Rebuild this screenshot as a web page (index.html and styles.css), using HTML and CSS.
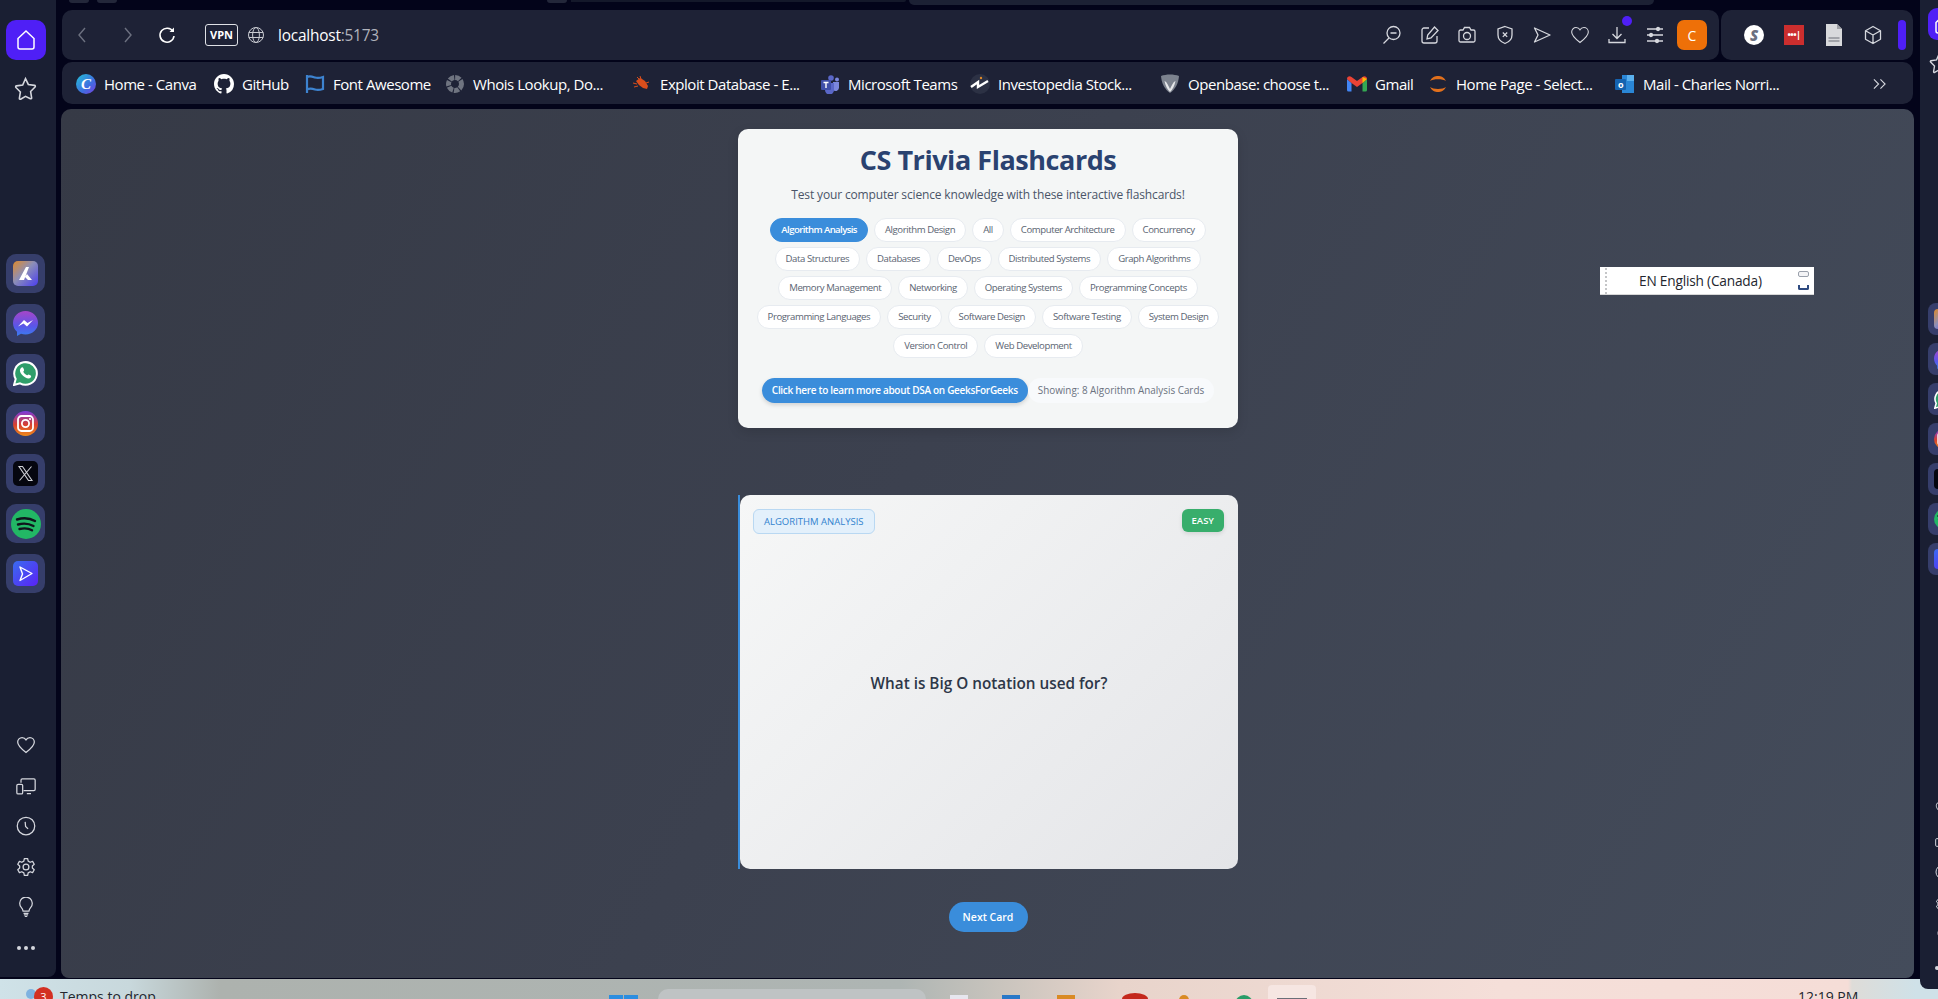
FILE: index.html
```html
<!DOCTYPE html>
<html lang="en">
<head>
<meta charset="utf-8">
<title>CS Trivia Flashcards</title>
<link rel="stylesheet" href="styles.css">
</head>
<body>
<svg class="defs" aria-hidden="true">
  <defs>
    <linearGradient id="gAi" x1="0" y1="0" x2="1" y2="1"><stop offset="0" stop-color="#e08a2a"/><stop offset=".45" stop-color="#8c8fb8"/><stop offset="1" stop-color="#4a3df0"/></linearGradient>
    <linearGradient id="gMsg" x1="0" y1="0" x2="0" y2="1"><stop offset="0" stop-color="#a646c8"/><stop offset=".6" stop-color="#5a55e8"/><stop offset="1" stop-color="#3a7df0"/></linearGradient>
    <linearGradient id="gIg" x1="0" y1="0" x2="0" y2="1"><stop offset="0" stop-color="#7a3be0"/><stop offset=".55" stop-color="#d8402e"/><stop offset="1" stop-color="#ee8a1c"/></linearGradient>
    <linearGradient id="gPlay" x1="0" y1="0" x2="1" y2="1"><stop offset="0" stop-color="#3a6cf0"/><stop offset="1" stop-color="#5a22f5"/></linearGradient>
    <symbol id="home" viewBox="0 0 24 24"><path d="M4 10.500 12 3l8 7.500V19a2 2 0 0 1-2 2H6a2 2 0 0 1-2-2z"/></symbol>
    <symbol id="star" viewBox="0 0 24 24"><path d="M12 2.500l2.700 5.600 6 .9c.7.1 1 1 .5 1.500l-4.300 4.300 1 6.100c.1.700-.6 1.200-1.200.900L12 19.500l-4.700 2.800c-.6.300-1.300-.2-1.200-.9l1-6.100-4.300-4.300c-.5-.5-.2-1.400.5-1.500l6-.9z"/></symbol>
    <symbol id="heart" viewBox="0 0 24 24"><path d="M12 21C6 16.500 2 13 2 8.500 2 5.400 4.400 3 7.300 3 9.200 3 11 4 12 5.800 13 4 14.800 3 16.700 3 19.600 3 22 5.400 22 8.500 22 13 18 16.500 12 21z"/></symbol>
    <symbol id="devices" viewBox="0 0 24 24"><path d="M6 8V5a1.500 1.500 0 0 1 1.500-1.500h14A1.500 1.500 0 0 1 23 5v11a1.500 1.500 0 0 1-1.500 1.500H9M13 21h5"/><rect x="1" y="10" width="7" height="11.500" rx="1.500"/></symbol>
    <symbol id="clock" viewBox="0 0 24 24"><circle cx="12" cy="12" r="10.500"/><path d="M11 7l.5 5.500 3 3"/></symbol>
    <symbol id="gear" viewBox="0 0 24 24"><circle cx="12" cy="12" r="3.500"/><path d="M10 2h4l.6 3 2.400 1.300 2.900-1 2 3.400-2.300 2 .0 2.600 2.300 2-2 3.400-2.900-1L14.600 19l-.6 3h-4l-.6-3L7 17.700l-2.900 1-2-3.400 2.300-2v-2.600l-2.300-2 2-3.400 2.900 1L9.400 5z" stroke-linejoin="round"/></symbol>
    <symbol id="bulb" viewBox="0 0 24 24"><path d="M8.500 17c-.2-2-1-3-2.200-4.500A7.500 7.500 0 1 1 17.700 12.500C16.500 14 15.700 15 15.500 17zM9 19.500h6M9.500 21.500h5M10.500 23.500h3"/></symbol>
    <symbol id="ai" viewBox="0 0 25 25"><rect width="25" height="25" rx="5" fill="url(#gAi)"/><path d="M6 19 13 6h3L11 19zM14 13l5 6h-4l-3-3z" fill="#fff"/></symbol>
    <symbol id="msg" viewBox="0 0 25 25"><path d="M12.500 0C5.500 0 0 5.200 0 12c0 3.600 1.500 6.700 4 8.800V25l4-2.200c1.400.4 2.900.6 4.500.6 7 0 12.500-5.200 12.500-11.400C25 5.200 19.500 0 12.500 0z" fill="url(#gMsg)"/><path d="M5 15.500l6-6.500 3.500 3 5.500-3-6 6.500-3.500-3z" fill="#fff"/></symbol>
    <symbol id="wa" viewBox="0 0 25 25"><path d="M1 24l1.700-6A11.300 11.300 0 1 1 7 22.300z" fill="#2f9e6a" stroke="#fff" stroke-width="2"/><path d="M8 7c1-1 2-.8 2.300 0l.8 2c.1.500-.8 1.300-.8 1.800.6 1.500 2 2.800 3.700 3.500.5 0 1.200-1 1.700-.8l2 1c.7.400.6 1.300-.2 2.200-1 1-3 1-5.500-.5-2.500-1.500-4.500-3.700-5-6-.2-1.200.2-2.300 1-3.200z" fill="#fff"/></symbol>
    <symbol id="ig" viewBox="0 0 25 25"><circle cx="12.500" cy="12.500" r="12.500" fill="url(#gIg)"/><rect x="5" y="5" width="15" height="15" rx="3.500" fill="none" stroke="#fff" stroke-width="1.800"/><circle cx="12.500" cy="12.500" r="3.600" fill="none" stroke="#fff" stroke-width="1.800"/><circle cx="17" cy="8" r="1.100" fill="#fff"/></symbol>
    <symbol id="x" viewBox="0 0 25 25"><rect width="25" height="25" rx="5" fill="#05060f"/><path d="M6 5.500h3.500L19 19.500h-3.500zM18.500 5.500 6.500 19.500" fill="none" stroke="#cfd0d6" stroke-width="1.100"/></symbol>
    <symbol id="spot" viewBox="0 0 30 30"><circle cx="15" cy="15" r="15" fill="#22b765"/><path d="M6 10.500c6-1.800 13-1.300 18 1.500M7 15.500c5-1.400 11-1 15.500 1.500M8.500 20c4-1 9-.8 12.500 1.300" fill="none" stroke="#10141c" stroke-width="2.400" stroke-linecap="round"/></symbol>
    <symbol id="play" viewBox="0 0 25 25"><rect width="25" height="25" rx="5" fill="url(#gPlay)"/><path d="M7 6l12 6.500L7 19.500 9.500 13z" fill="none" stroke="#fff" stroke-width="1.400" stroke-linejoin="round"/></symbol>
  </defs>
</svg>

<div class="desktop">
  <div class="window">
    <aside class="sidebar">
      <a class="home-tile"><svg class="line lg"><use href="#home"/></svg></a>
      <svg class="line star"><use href="#star"/></svg>
      <div class="tiles">
        <div class="tile"><svg class="app"><use href="#ai"/></svg></div>
        <div class="tile"><svg class="app"><use href="#msg"/></svg></div>
        <div class="tile"><svg class="app"><use href="#wa"/></svg></div>
        <div class="tile"><svg class="app"><use href="#ig"/></svg></div>
        <div class="tile"><svg class="app"><use href="#x"/></svg></div>
        <div class="tile"><svg class="spot"><use href="#spot"/></svg></div>
        <div class="tile"><svg class="app"><use href="#play"/></svg></div>
      </div>
      <div class="side-tools">
        <svg class="line tool"><use href="#heart"/></svg>
        <svg class="line tool"><use href="#devices"/></svg>
        <svg class="line tool"><use href="#clock"/></svg>
        <svg class="line tool"><use href="#gear"/></svg>
        <svg class="line tool"><use href="#bulb"/></svg>
        <div class="dots"><span></span><span></span><span></span></div>
      </div>
    </aside>

    <div class="browser">
      <div class="tabstrip">
        <span class="tab-dot"></span><span class="tab-dot"></span><span class="tab-gap"></span><span class="tab-dot"></span>
        <span class="tab-fill"></span><span class="tab-active"></span>
      </div>
      <div class="toprow">
        <div class="toolbar">
          <svg class="nav dim" viewBox="0 0 12 20"><path d="M9 3 3 10l6 7"/></svg>
          <svg class="nav dim fwd" viewBox="0 0 12 20"><path d="M3 3l6 7-6 7"/></svg>
          <svg class="reload" viewBox="0 0 20 20"><path d="M16 6.500A7 7 0 1 0 17 11"/><path d="M17 2.500V7h-4.500z" fill="#fff" stroke="none"/></svg>
          <span class="vpn">VPN</span>
          <svg class="globe" viewBox="0 0 18 18"><circle cx="9" cy="9" r="7.500"/><ellipse cx="9" cy="9" rx="3.400" ry="7.500"/><path d="M1.800 6.500h14.400M1.800 11.500h14.400"/></svg>
          <span class="url">localhost<span class="port">:5173</span></span>
          <div class="actions">
            <svg class="act" viewBox="0 0 20 20"><circle cx="11.500" cy="8" r="6.500"/><path d="M8.500 8h6M7 13l-5.500 5.500"/></svg>
            <svg class="act" viewBox="0 0 20 20"><path d="M9 3H4a2 2 0 0 0-2 2v11a2 2 0 0 0 2 2h11a2 2 0 0 0 2-2v-5"/><path d="M14.500 2 18 5.500 11 13l-4 1 .7-4z"/></svg>
            <svg class="act" viewBox="0 0 20 20"><path d="M2 6.500a1.500 1.500 0 0 1 1.500-1.500H6l1.500-2.500h5L14 5h2.500A1.500 1.500 0 0 1 18 6.500v9a1.500 1.500 0 0 1-1.500 1.500h-13A1.500 1.500 0 0 1 2 15.500z"/><circle cx="10" cy="11" r="3.500"/></svg>
            <svg class="act" viewBox="0 0 20 20"><path d="M10 1.500l7 2.500v6c0 4-3 7-7 8.500-4-1.500-7-4.500-7-8.500V4z"/><path d="M7.800 7.500l4.400 4.400M12.200 7.500l-4.400 4.400"/></svg>
            <svg class="act" viewBox="0 0 20 20"><path d="M2.500 3 18 10 2.500 17 6 10z" stroke-linejoin="round"/></svg>
            <svg class="act" viewBox="0 0 24 24"><use href="#heart"/></svg>
            <div class="dl">
              <svg class="act" viewBox="0 0 20 20"><path d="M10 2v11M5.500 9l4.500 4.500L14.500 9M2 14v3.500h16V14"/></svg>
              <span class="dl-badge"></span>
            </div>
            <svg class="act" viewBox="0 0 20 20"><path d="M2 4h16M2 10h16M2 16h16"/><circle cx="13" cy="4" r="1.500" fill="#d6d8de"/><circle cx="6" cy="10" r="1.500" fill="#d6d8de"/><circle cx="12" cy="16" r="1.500" fill="#d6d8de"/></svg>
            <span class="avatar">C</span>
          </div>
        </div>
        <div class="extensions">
          <span class="ext-s">S</span>
          <span class="ext-lp">•••|</span>
          <svg class="ext-doc" viewBox="0 0 18 22"><path d="M1 0h11l5 5v17H1z" fill="#d8d9dc"/><path d="M12 0v5h5z" fill="#9ea0a6"/><path d="M3.500 14h11M3.500 17h11" stroke="#8f9198" stroke-width="1.500"/></svg>
          <svg class="act" viewBox="0 0 20 20"><path d="M10 1.500 17.500 5.800v8.400L10 18.500l-7.500-4.300V5.800zM2.500 5.800 10 10l7.500-4.200M10 10v8.500" stroke-linejoin="round"/></svg>
          <span class="ext-bar"></span>
        </div>
      </div>

      <nav class="bookmarks">
        <a class="bm"><span class="ico-canva">C</span>Home - Canva</a>
        <a class="bm"><svg class="bm-ico" viewBox="0 0 16 16"><path fill="#fff" d="M8 0C3.580 0 0 3.580 0 8c0 3.540 2.290 6.530 5.470 7.590.4.070.55-.17.55-.38 0-.19-.01-.82-.01-1.490-2.010.37-2.530-.49-2.690-.94-.09-.23-.48-.94-.82-1.130-.28-.15-.68-.52-.01-.53.63-.01 1.080.58 1.230.82.72 1.210 1.870.87 2.330.66.070-.52.28-.87.51-1.070-1.780-.2-3.640-.89-3.640-3.950 0-.87.31-1.590.82-2.150-.08-.2-.36-1.020.08-2.120 0 0 .67-.21 2.200.82.64-.18 1.320-.27 2-.27.68 0 1.360.09 2 .27 1.530-1.040 2.200-.82 2.200-.82.44 1.100.16 1.920.08 2.120.51.56.82 1.270.82 2.150 0 3.070-1.870 3.750-3.650 3.950.29.25.54.73.54 1.480 0 1.070-.01 1.930-.01 2.200 0 .21.15.46.55.38A8.013 8.013 0 0 0 16 8c0-4.420-3.580-8-8-8z"/></svg>GitHub</a>
        <a class="bm"><svg class="bm-ico" viewBox="0 0 20 20"><path d="M2 1v18M2 3c3-1.500 5-.5 8 .5s5 .5 8-.5v12c-3 1-5 1.500-8 .5s-5-1.500-8 0" fill="none" stroke="#3d83d0" stroke-width="2.200"/></svg>Font Awesome</a>
        <a class="bm"><svg class="bm-ico" viewBox="0 0 20 20"><circle cx="10" cy="10" r="6.500" fill="none" stroke="#6f7480" stroke-width="5" stroke-dasharray="5 1"/></svg>Whois Lookup, Do...</a>
        <a class="bm"><svg class="bm-ico" viewBox="0 0 20 20"><path d="M4 7l4-3 2 1 3 2 3 5-1 3-4-1-4-3z" fill="#d94e1c"/><path d="M1 9l4 1M2 13l4-1M8 2l1 3M5 3l2 2M17 8l-3 1" stroke="#d94e1c" stroke-width="1"/></svg>Exploit Database - E...</a>
        <a class="bm"><svg class="bm-ico" viewBox="0 0 20 20"><circle cx="11" cy="4" r="2.800" fill="#5a67c8"/><circle cx="17" cy="5.500" r="2" fill="#7b87dc"/><path d="M13 8h6v6a3.500 3.500 0 0 1-6 2z" fill="#7b87dc"/><path d="M5 9h9v7a4 4 0 0 1-9 0z" fill="#5a67c8"/><rect x="1" y="6" width="10" height="10" rx="1" fill="#3f4fa8"/><path d="M3.500 8.500h5M6 8.500V14" stroke="#fff" stroke-width="1.400"/></svg>Microsoft Teams</a>
        <a class="bm"><svg class="bm-ico" viewBox="0 0 20 20"><circle cx="10" cy="10" r="10" fill="#2c3144"/><path d="M1 13l7-5v5l10-6" fill="none" stroke="#fff" stroke-width="2.400"/><circle cx="11" cy="4" r="1.200" fill="#e08a2a"/></svg>Investopedia Stock...</a>
        <a class="bm"><svg class="bm-ico" viewBox="0 0 20 20"><path d="M1 2c5-2 13-2 18 0-.5 7-3.500 13-9 17C4.500 15 1.500 9 1 2z" fill="#7c828e"/><path d="M4.500 7c2.500 1 3.500 4 5.500 8 2-4 3-7 5.500-8-1 5-3 8.500-5.500 11C7.500 15.500 5.500 12 4.500 7z" fill="#e6e7ea"/></svg>Openbase: choose t...</a>
        <a class="bm"><svg class="bm-ico" viewBox="0 0 20 16"><path d="M0 3v11a1.500 1.500 0 0 0 1.500 1.500H4.500V7z" fill="#4285f4"/><path d="M20 3v11a1.500 1.500 0 0 1-1.500 1.500h-3V7z" fill="#34a853"/><path d="M0 3c0-2.500 2.600-3.500 4.500-2L10 5l5.500-4C17.400-.5 20 .5 20 3l-4.500 4L10 11 4.500 7z" fill="#ea4335"/><path d="M15.500 1 20 3l-4.500 4z" fill="#fbbc04"/></svg>Gmail</a>
        <a class="bm"><svg class="bm-ico" viewBox="0 0 20 20"><path d="M2 7C4 3 7 2 10 2s6 1 8 5C15 4.500 5 4.500 2 7zM2 13c3 2.500 13 2.500 16 0-2 4-5 5-8 5s-6-1-8-5z" fill="#e2701c"/></svg>Home Page - Select...</a>
        <a class="bm"><svg class="bm-ico" viewBox="0 0 20 20"><path d="M7 1h12v18H7z" fill="#2a86d6"/><path d="M12 1h7v6h-7z" fill="#5ab0ee"/><rect x="0" y="5" width="11" height="11" rx="1" fill="#1563b0"/><text class="o-letter" x="5.500" y="13.500">o</text></svg>Mail - Charles Norri...</a>
        <svg class="more" viewBox="0 0 14 12"><path d="M1 1l5 5-5 5M8 1l5 5-5 5"/></svg>
      </nav>

      <main class="panel">
        <section class="header-card">
          <h1 class="title">CS Trivia Flashcards</h1>
          <p class="subtitle">Test your computer science knowledge with these interactive flashcards!</p>
          <div class="filters">
            <button class="pill active">Algorithm Analysis</button>
            <button class="pill">Algorithm Design</button>
            <button class="pill">All</button>
            <button class="pill">Computer Architecture</button>
            <button class="pill">Concurrency</button>
            <button class="pill">Data Structures</button>
            <button class="pill">Databases</button>
            <button class="pill">DevOps</button>
            <button class="pill">Distributed Systems</button>
            <button class="pill">Graph Algorithms</button>
            <button class="pill">Memory Management</button>
            <button class="pill">Networking</button>
            <button class="pill">Operating Systems</button>
            <button class="pill">Programming Concepts</button>
            <button class="pill">Programming Languages</button>
            <button class="pill">Security</button>
            <button class="pill">Software Design</button>
            <button class="pill">Software Testing</button>
            <button class="pill">System Design</button>
            <button class="pill">Version Control</button>
            <button class="pill">Web Development</button>
          </div>
          <div class="links">
            <a class="learn">Click here to learn more about DSA on GeeksForGeeks</a>
            <span class="showing">Showing: 8 Algorithm Analysis Cards</span>
          </div>
        </section>

        <section class="flashcard">
          <div class="card-top">
            <span class="tag">ALGORITHM ANALYSIS</span>
            <span class="level">EASY</span>
          </div>
          <p class="question">What is Big O notation used for?</p>
        </section>

        <button class="next">Next Card</button>

        <div class="langbar">
          <span class="grip"></span>
          <span class="lang">EN English (Canada)</span>
          <span class="lang-ctl"><i class="ctl-a"></i><i class="ctl-b"></i></span>
        </div>
      </main>
    </div>

    <aside class="sidebar-2">
      <a class="home-tile-2"><svg class="line lg"><use href="#home"/></svg></a>
      <svg class="line star"><use href="#star"/></svg>
      <div class="tiles-2">
        <div class="tile-2"><svg class="app-2"><use href="#ai"/></svg></div>
        <div class="tile-2"><svg class="app-2"><use href="#msg"/></svg></div>
        <div class="tile-2"><svg class="app-2"><use href="#wa"/></svg></div>
        <div class="tile-2"><svg class="app-2"><use href="#ig"/></svg></div>
        <div class="tile-2"><svg class="app-2"><use href="#x"/></svg></div>
        <div class="tile-2"><svg class="app-2"><use href="#spot"/></svg></div>
        <div class="tile-2"><svg class="app-2"><use href="#play"/></svg></div>
      </div>
      <div class="tools-2">
        <svg class="line tool-2"><use href="#heart"/></svg>
        <svg class="line tool-2"><use href="#devices"/></svg>
        <svg class="line tool-2"><use href="#clock"/></svg>
        <svg class="line tool-2"><use href="#gear"/></svg>
        <svg class="line tool-2"><use href="#bulb"/></svg>
        <div class="dots dots-2"><span></span><span></span><span></span></div>
      </div>
    </aside>
  </div>

  <footer class="taskbar">
    <span class="tb-ball"></span>
    <span class="tb-badge">3</span>
    <span class="tb-weather">Temps to drop</span>
    <span class="tb-win"><i></i><i></i></span>
    <span class="tb-search"></span>
    <span class="tb-icon tb-white"></span>
    <span class="tb-icon tb-blue"></span>
    <span class="tb-icon tb-orange"></span>
    <span class="tb-icon tb-red"></span>
    <span class="tb-icon tb-amber"></span>
    <span class="tb-icon tb-green"></span>
    <span class="tb-active"><i></i></span>
    <span class="tb-clock">12:19 PM</span>
  </footer>
</div>
</body>
</html>
```

FILE: styles.css
```css
* { box-sizing: border-box; }
html, body { margin: 0; height: 100%; overflow: hidden; }
body { background: #03041a; font-family: "Open Sans", "Noto Sans", sans-serif; }
.defs { position: absolute; width: 0; height: 0; }
button { font-family: inherit; }

.desktop { width: 1938px; height: 999px; display: flex; flex-direction: column; overflow: hidden; position: relative; }
.window { height: 979px; display: flex; align-items: flex-start; }

/* icons */
.line { fill: none; stroke: #d5d7de; stroke-width: 1.500; }
.lg { width: 24px; height: 26px; stroke: #fff; }
.star { width: 25px; height: 25px; display: block; }

/* left sidebar */
.sidebar { width: 56px; height: 977px; background: #1a1f33; border-bottom-right-radius: 8px; padding: 20px 0 0 6px; display: flex; flex-direction: column; align-items: flex-start; flex: none; }
.home-tile { width: 40px; height: 40px; background: #4f1ff6; border-radius: 10px; display: flex; align-items: center; justify-content: center; }
.sidebar .star { margin: 16px 0 0 7px; }
.tiles { margin-top: 153px; display: flex; flex-direction: column; gap: 11px; }
.tile { width: 39px; height: 39px; border-radius: 10px; background: #363e6b; display: flex; align-items: center; justify-content: center; }
.app { width: 25px; height: 25px; }
.spot { width: 30px; height: 30px; }
.side-tools { margin-top: 142px; width: 39px; display: flex; flex-direction: column; align-items: center; gap: 20.500px; }
.tool { width: 20px; height: 20px; display: block; }
.dots { display: flex; gap: 3px; height: 4px; margin-top: 8px; }
.dots span { width: 4px; height: 4px; border-radius: 50%; background: #d5d7de; }

/* browser */
.browser { width: 1858px; margin-left: 5px; flex: none; position: relative; }
.tabstrip { height: 10px; display: flex; align-items: flex-start; }
.tab-dot { width: 20px; height: 3px; background: #23273a; border-radius: 0 0 8px 8px; margin-left: 8px; }
.tab-gap { width: 422px; }
.tab-fill { width: 335px; height: 2px; background: #14182a; margin-left: 4px; border-radius: 0 0 8px 0; }
.tab-active { width: 745px; height: 5px; margin-left: 3px; background: #1c2134; border-radius: 0 0 10px 10px; }
.toprow { display: flex; gap: 2px; height: 50px; margin-left: 1px; }
.toolbar { width: 1657px; background: #1e2236; border-radius: 10px; display: flex; align-items: center; padding-left: 14px; }
.nav { width: 12px; height: 20px; fill: none; stroke: #6d7180; stroke-width: 1.400; flex: none; }
.fwd { margin-left: 34px; }
.reload { width: 20px; height: 20px; fill: none; stroke: #fff; stroke-width: 1.600; margin-left: 23px; flex: none; }
.vpn { width: 33px; height: 22px; margin-left: 28px; border: 1px solid #dfe1e6; border-radius: 3px; color: #fff; font-size: 11px; font-weight: 700; line-height: 20px; text-align: center; flex: none; }
.globe { width: 18px; height: 18px; fill: none; stroke: #c7c9d0; stroke-width: 1; margin-left: 9px; flex: none; }
.url { margin-left: 13px; font-size: 15.400px; color: #fff; letter-spacing: -.2px; white-space: nowrap; }
.port { color: #b0b3bc; }
.actions { margin-left: auto; display: flex; align-items: center; gap: 17.500px; padding-right: 12px; }
.act { width: 20px; height: 20px; fill: none; stroke: #d6d8de; stroke-width: 1.300; display: block; flex: none; }
.dl { position: relative; }
.dl-badge { position: absolute; top: -9px; right: -5px; width: 10px; height: 10px; border-radius: 50%; background: #4f1ff6; }
.avatar { width: 30px; height: 30px; background: #ee7008; border-radius: 7px; color: #fff; font-size: 14px; display: flex; align-items: center; justify-content: center; margin-left: -5px; }
.extensions { width: 192px; background: #1e2236; border-radius: 10px; display: flex; align-items: center; padding-left: 23px; }
.ext-s { width: 20px; height: 20px; border-radius: 50%; background: #fff; color: #6c7080; font-weight: 800; font-size: 15px; font-style: italic; line-height: 20px; text-align: center; flex: none; }
.ext-lp { width: 20px; height: 20px; background: #cc2e2e; color: #fff; font-size: 9px; font-weight: 700; line-height: 20px; text-align: center; margin-left: 20px; flex: none; letter-spacing: -.5px; }
.ext-doc { width: 18px; height: 22px; margin-left: 21px; flex: none; }
.extensions .act { margin-left: 20px; }
.ext-bar { width: 8px; height: 30px; border-radius: 4px; background: #4f1ff6; margin-left: 15px; }

/* bookmarks */
.bookmarks { margin: 2px 0 0 1px; width: 1851px; height: 42px; background: #1e2236; border-radius: 10px; display: grid; grid-template-columns: 138px 91px 140px 187px 188px 150px 190px 187px 81px 187px 258px 14px; align-items: center; padding: 2px 0 0 14px; }
.bm { display: flex; align-items: center; gap: 8px; color: #fff; font-size: 15px; white-space: nowrap; letter-spacing: -.45px; overflow: hidden; }
.bm-ico { width: 20px; height: 20px; flex: none; }
.ico-canva { width: 20px; height: 20px; border-radius: 50%; background: linear-gradient(135deg, #22c3d8, #3f6ee0 60%, #7a3de0); color: #fff; font: italic 700 15px/20px "Liberation Serif", serif; text-align: center; flex: none; letter-spacing: 0; }
.o-letter { font-size: 9px; font-weight: 700; fill: #fff; text-anchor: middle; }
.more { width: 13px; height: 12px; fill: none; stroke: #d5d7de; stroke-width: 1.200; }

/* panel */
.panel { position: relative; margin-top: 5px; width: 1853px; height: 869px; padding: 20px 0 0 1px; border-radius: 10px 10px 8px 8px; background: linear-gradient(120deg, #363a46 0%, #3c414f 45%, #444c5b 100%); display: flex; flex-direction: column; align-items: center; overflow: hidden; }
.header-card { width: 500px; height: 299px; background: #f4f6f6; border-radius: 10px; box-shadow: 0 4px 12px rgba(0,0,0,.12); padding: 12px 15px 0; text-align: center; flex: none; }
.title { margin: 0; font-size: 27px; line-height: 38px; font-weight: 700; color: #2a4270; letter-spacing: -.45px; }
.subtitle { margin: 6px 0 0; font-size: 12px; line-height: 20px; color: #4a5568; letter-spacing: -.15px; }
.filters { display: flex; flex-wrap: wrap; justify-content: center; gap: 5px 6px; margin-top: 13px; }
.pill { height: 24px; padding: 0 10px; border: 1px solid #e7ebf0; border-radius: 12px; background: #fff; color: #5a6472; font-size: 9.600px; line-height: 22px; white-space: nowrap; letter-spacing: -.42px; }
.pill.active { background: #3a8ddb; border-color: #3a8ddb; color: #fff; font-weight: 600; letter-spacing: -.6px; }
.links { display: flex; justify-content: center; margin-top: 20px; }
.learn { height: 25px; padding: 0 10px; border-radius: 13px; background: #3a8ddb; color: #fff; font-size: 10px; font-weight: 600; line-height: 25px; box-shadow: 0 2px 4px rgba(0,0,0,.15); white-space: nowrap; letter-spacing: -.3px; }
.showing { height: 25px; padding: 0 10px; border-radius: 13px; background: #f8fafc; color: #6b7280; font-size: 9.900px; line-height: 25px; white-space: nowrap; }

.flashcard { width: 498px; height: 374px; margin: 67px 0 0 2px; flex: none; padding: 14px 14px 0 13px; background: linear-gradient(135deg, #f6f7f7 0%, #e4e5e8 100%); border-radius: 10px; position: relative; }
.flashcard::before { content: ""; position: absolute; left: -2px; top: 0; bottom: 0; width: 2px; background: #3a8ddb; }
.card-top { display: flex; justify-content: space-between; align-items: flex-start; }
.tag { height: 25px; padding: 0 10px; background: #e3f0fb; border: 1px solid #b9d8f2; border-radius: 6px; color: #3182ce; font-size: 9.500px; line-height: 23px; }
.level { height: 23px; padding: 0 10px; background: #38ae6c; border-radius: 6px; color: #fff; font-size: 9.500px; font-weight: 600; line-height: 23px; box-shadow: 0 2px 4px rgba(0,0,0,.1); }
.question { margin: 0; position: absolute; left: 0; right: 0; top: 176px; text-align: center; font-size: 15.300px; font-weight: 600; line-height: 24px; color: #2d3748; }
.next { width: 79px; height: 30px; margin-top: 33px; border: 0; border-radius: 15px; background: #3a8ddb; color: #fff; font-size: 10.500px; font-weight: 600; flex: none; padding: 0; }

.langbar { position: absolute; left: 1539px; top: 158px; width: 214px; height: 28px; background: #fff; display: flex; align-items: center; border-bottom: 1px solid #d8d8d8; }
.grip { width: 2px; height: 26px; margin-left: 5px; border-left: 2px dotted #c5c6c8; }
.lang { margin-left: 32px; font-size: 13.700px; color: #23262e; letter-spacing: -.2px; white-space: nowrap; }
.lang-ctl { margin-left: auto; margin-right: 5px; width: 11px; display: flex; flex-direction: column; gap: 8px; }
.ctl-a { display: block; height: 6px; border: 1px solid #9aa0ab; border-radius: 2px; background: #f4f4f6; }
.ctl-b { display: block; height: 5px; border: 2px solid #2e4a80; border-top: 0; border-radius: 0 0 2px 2px; }

/* right sidebar */
.sidebar-2 { width: 22px; height: 989px; margin-left: 1px; background: #1a1f33; border-bottom-left-radius: 8px; padding: 8px 0 0 8px; flex: none; position: relative; z-index: 2; overflow: hidden; display: flex; flex-direction: column; align-items: flex-start; }
.home-tile-2 { width: 32px; height: 32px; flex: none; background: #4f1ff6; border-radius: 9px; display: flex; align-items: center; justify-content: center; }
.sidebar-2 .star { margin-top: 12px; width: 22px; height: 22px; flex: none; }
.tiles-2 { margin-top: 229px; display: flex; flex-direction: column; gap: 8px; flex: none; }
.tile-2 { width: 32px; height: 32px; border-radius: 8px; background: #363e6b; display: flex; align-items: center; justify-content: center; }
.app-2 { width: 20px; height: 20px; flex: none; }
.tools-2 { margin: 225px 0 0 7px; display: flex; flex-direction: column; gap: 16px; flex: none; }
.tool-2 { width: 16px; height: 16px; display: block; }
.dots-2 { margin-top: 6px; }

/* taskbar */
.taskbar { height: 20px; flex: none; display: flex; overflow: hidden; background: linear-gradient(90deg, #cfe2e8 0, #c8d8dc 130px, #adb2ae 220px, #aeb5b3 900px, #c9c4bd 1000px, #e8d4cb 1120px, #f5dfd9 1500px, #f5ddd7 1848px, #dedcd8 1852px, #cfe1e8 1916px); position: relative; color: #23262e; }
.tb-ball { width: 10px; height: 10px; margin: 10px 0 0 26px; border-radius: 50%; background: #7fb2e0; }
.tb-badge { width: 19px; height: 19px; margin: 8px 0 0 -2px; border-radius: 50%; background: #d32f22; color: #fff; font-size: 11px; line-height: 19px; text-align: center; flex: none; }
.tb-weather { margin: 9px 0 0 7px; font-size: 14px; line-height: 18px; white-space: nowrap; width: 110px; flex: none; }
.tb-win { display: flex; gap: 1px; margin: 16px 0 0 439px; flex: none; }
.tb-win i { display: block; width: 14px; height: 10px; background: #2c8ee0; }
.tb-search { width: 268px; height: 20px; margin: 10px 0 0 20px; border-radius: 10px 10px 0 0; background: #bfc3c4; flex: none; }
.tb-icon { width: 18px; height: 12px; margin-top: 16px; flex: none; }
.tb-white { margin-left: 24px; background: #e6e6ee; }
.tb-blue { margin-left: 34px; background: #2878c8; }
.tb-orange { margin-left: 37px; background: #d98a24; }
.tb-red { margin-left: 47px; width: 26px; margin-top: 14px; border-radius: 50% 50% 0 0; background: #c4281c; }
.tb-amber { margin-left: 31px; width: 10px; border-radius: 5px 5px 0 0; background: #d98a24; }
.tb-green { margin-left: 46px; border-radius: 9px 9px 0 0; background: #2a9d68; }
.tb-active { width: 48px; height: 16px; margin: 6px 0 0 15px; background: #f6e6e2; border-radius: 4px 4px 0 0; flex: none; padding: 13px 9px 0; }
.tb-active i { display: block; height: 3px; background: #6a6f78; }
.tb-clock { position: absolute; left: 1798px; top: 9px; font-size: 14px; line-height: 18px; }
```
